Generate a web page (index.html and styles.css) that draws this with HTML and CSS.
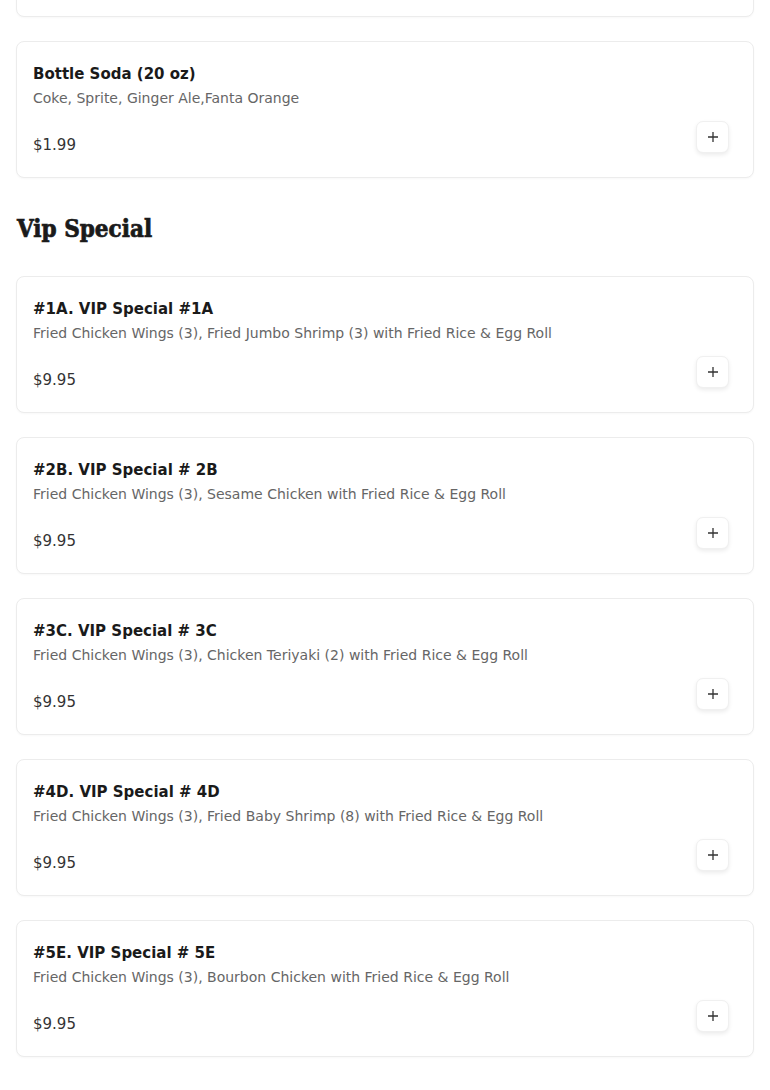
FILE: index.html
```html
<!DOCTYPE html>
<html>
<head>
<meta charset="utf-8">
<link rel="stylesheet" href="styles.css">
</head>
<body>
<div class="menu">
  <div class="card card-cut"></div>

  <div class="card">
    <div class="title">Bottle Soda (20 oz)</div>
    <div class="desc">Coke, Sprite, Ginger Ale,Fanta Orange</div>
    <div class="row"><span class="price">$1.99</span><button class="add" aria-label="Add"><svg viewBox="0 0 12 12" width="12" height="12"><path d="M6 1v10M1 6h10" stroke="#333" stroke-width="1.3"/></svg></button></div>
  </div>

  <h2 class="section">Vip Special</h2>

  <div class="card">
    <div class="title">#1A. VIP Special #1A</div>
    <div class="desc">Fried Chicken Wings (3), Fried Jumbo Shrimp (3) with Fried Rice &amp; Egg Roll</div>
    <div class="row"><span class="price">$9.95</span><button class="add" aria-label="Add"><svg viewBox="0 0 12 12" width="12" height="12"><path d="M6 1v10M1 6h10" stroke="#333" stroke-width="1.3"/></svg></button></div>
  </div>

  <div class="card">
    <div class="title">#2B. VIP Special # 2B</div>
    <div class="desc">Fried Chicken Wings (3), Sesame Chicken with Fried Rice &amp; Egg Roll</div>
    <div class="row"><span class="price">$9.95</span><button class="add" aria-label="Add"><svg viewBox="0 0 12 12" width="12" height="12"><path d="M6 1v10M1 6h10" stroke="#333" stroke-width="1.3"/></svg></button></div>
  </div>

  <div class="card">
    <div class="title">#3C. VIP Special # 3C</div>
    <div class="desc">Fried Chicken Wings (3), Chicken Teriyaki (2) with Fried Rice &amp; Egg Roll</div>
    <div class="row"><span class="price">$9.95</span><button class="add" aria-label="Add"><svg viewBox="0 0 12 12" width="12" height="12"><path d="M6 1v10M1 6h10" stroke="#333" stroke-width="1.3"/></svg></button></div>
  </div>

  <div class="card">
    <div class="title">#4D. VIP Special # 4D</div>
    <div class="desc">Fried Chicken Wings (3), Fried Baby Shrimp (8) with Fried Rice &amp; Egg Roll</div>
    <div class="row"><span class="price">$9.95</span><button class="add" aria-label="Add"><svg viewBox="0 0 12 12" width="12" height="12"><path d="M6 1v10M1 6h10" stroke="#333" stroke-width="1.3"/></svg></button></div>
  </div>

  <div class="card">
    <div class="title">#5E. VIP Special # 5E</div>
    <div class="desc">Fried Chicken Wings (3), Bourbon Chicken with Fried Rice &amp; Egg Roll</div>
    <div class="row"><span class="price">$9.95</span><button class="add" aria-label="Add"><svg viewBox="0 0 12 12" width="12" height="12"><path d="M6 1v10M1 6h10" stroke="#333" stroke-width="1.3"/></svg></button></div>
  </div>
</div>
</body>
</html>
```
FILE: styles.css
```css
* { box-sizing: border-box; }
html, body { margin: 0; padding: 0; background: #fff; }
body { font-family: "DejaVu Sans", "Noto Sans", sans-serif; color: #1a1a1a; }
.menu { padding: 0 16px; display: flex; flex-direction: column; }
.card {
  border: 1px solid #ececec;
  border-radius: 8px;
  background: #fff;
  padding: 20px 24px 20px 16px;
  margin-bottom: 24px;
  box-shadow: 0 1px 2px rgba(0,0,0,0.03);
}
.card-cut { height: 41px; margin-top: -24px; padding: 0; }
.title { font-size: 15px; font-weight: bold; line-height: 24px; color: #1a1a1a; }
.desc { font-size: 14px; line-height: 24px; color: #666; }
.row { display: flex; justify-content: space-between; align-items: flex-start; margin-top: 11px; }
.price { font-size: 15px; line-height: 24px; margin-top: 12px; color: #333; }
.add {
  width: 33px; height: 32px; border: 1px solid #f0f0f0; border-radius: 7px;
  background: #fff; display: flex; align-items: center; justify-content: center; padding: 0;
  box-shadow: 0 2px 4px rgba(0,0,0,0.08);
}
.section {
  font-family: "DejaVu Serif", serif; font-weight: bold; font-size: 24px; font-stretch: condensed;
  -webkit-text-stroke: 0.7px #1a1a1a;
  margin: 11px 0 31px 1px; line-height: 32px; color: #1a1a1a;
}
```
